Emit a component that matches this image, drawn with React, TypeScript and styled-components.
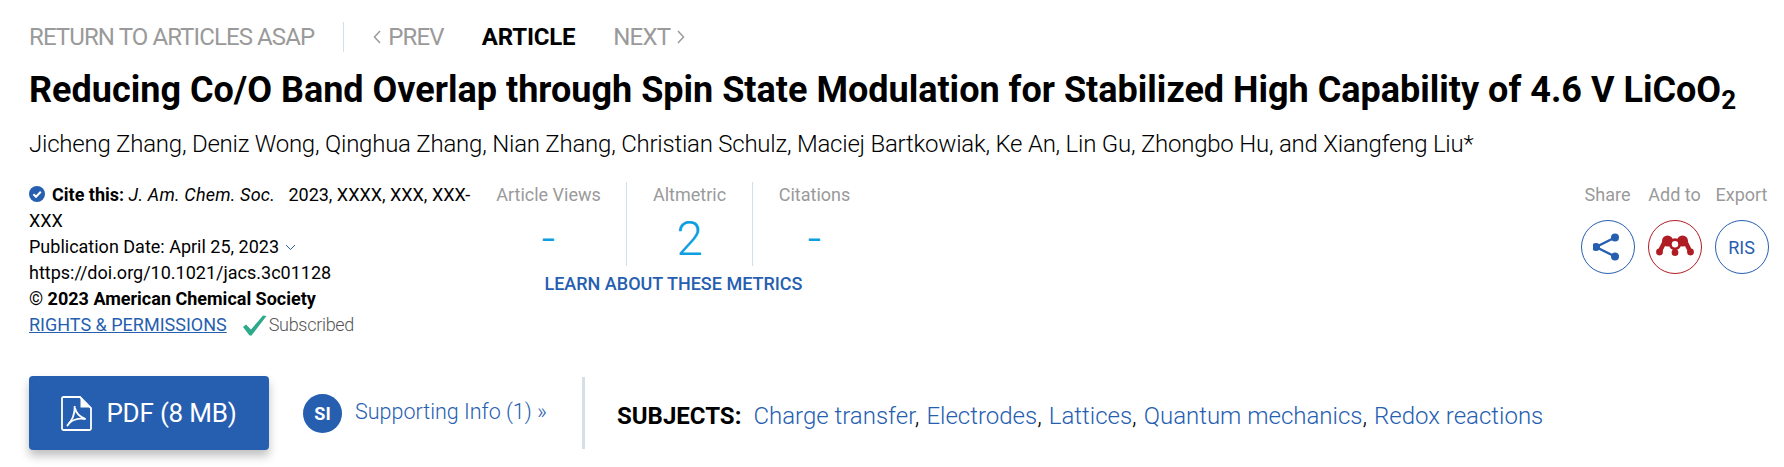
import styled, { createGlobalStyle } from "styled-components";

const GlobalStyle = createGlobalStyle`
  html, body { margin: 0; padding: 0; background: #fff; }
  body { font-family: Roboto, "Liberation Sans", sans-serif; color: #000; }
  a { text-decoration: none; color: inherit; }
`;

const blue = "#265eb0";
const grey = "#9a9a9a";
const red = "#b01c24";

const Page = styled.div`
  width: 1784px;
  height: 467px;
  box-sizing: border-box;
  padding: 19px 14px 0 29px;
  overflow: hidden;
`;

const Nav = styled.nav`
  display: flex;
  align-items: center;
  height: 36px;
  font-size: 24px;
  color: ${grey};
`;

const ReturnLink = styled.a`
  padding-right: 29px;
  margin-right: 29px;
  height: 30px;
  line-height: 30px;
  letter-spacing: -0.9px;
  border-right: 1px solid #d5dfe8;
`;

const NavItem = styled.a<{ $active?: boolean }>`
  display: flex;
  align-items: center;
  gap: 7px;
  margin-right: 38px;
  letter-spacing: ${(p) => (p.$active ? "-0.2px" : "-0.8px")};
  color: ${(p) => (p.$active ? "#000" : grey)};
  font-weight: ${(p) => (p.$active ? 700 : 400)};
`;

const Title = styled.h1`
  margin: 14px 0 0;
  font-size: 36px;
  line-height: 42px;
  font-weight: 700;
  white-space: nowrap;

  sub {
    font-size: 26px;
    line-height: 0;
    vertical-align: -7px;
  }
`;

const Authors = styled.div`
  margin-top: 18px;
  font-size: 24px;
  font-weight: 300;
  line-height: 30px;
  letter-spacing: -0.23px;
  white-space: nowrap;
`;

const Info = styled.div`
  display: flex;
  margin-top: 23px;
`;

const Cite = styled.div`
  width: 457px;
  font-size: 18px;
  line-height: 26px;
  flex: none;

  i {
    letter-spacing: 0.2px;
  }
`;

const CiteLine = styled.div`
  display: flex;
  align-items: center;
`;

const CiteWrap = styled.div`
  width: 445px;
`;

const CheckBadge = styled.svg`
  width: 16px;
  height: 16px;
  margin-right: 7px;
  vertical-align: -1px;
`;

const Rights = styled.a`
  color: ${blue};
  text-decoration: underline;
`;

const Subscribed = styled.span`
  display: inline-flex;
  align-items: center;
  gap: 2px;
  margin-left: 15px;
  color: #555;
  font-weight: 300;
  letter-spacing: -0.3px;
`;

const Metrics = styled.div`
  width: 393px;
  flex: none;
`;

const MetricRow = styled.div`
  display: flex;
`;

const Metric = styled.div<{ $first?: boolean; $last?: boolean }>`
  width: ${(p) => (p.$first ? "141px" : "126px")};
  height: 84px;
  padding-right: ${(p) => (p.$first ? "15px" : p.$last ? "3px" : "0")};
  text-align: center;
  box-sizing: border-box;
  border-right: ${(p) => (p.$last ? "none" : "1px solid #d5dfe8")};
`;

const MetricLabel = styled.div`
  font-size: 18px;
  line-height: 26px;
  color: ${grey};
`;

const MetricValue = styled.div`
  margin-top: 6px;
  font-size: 48px;
  line-height: 50px;
  font-weight: 300;
  color: #0d9fe0;
`;

const LearnLink = styled.a`
  display: block;
  width: 375px;
  margin-top: 5px;
  text-align: center;
  color: ${blue};
  font-size: 18px;
  font-weight: 500;
  line-height: 26px;
`;

const Actions = styled.div`
  margin-left: auto;
  margin-right: 1px;
  display: flex;
  gap: 12px;
`;

const Action = styled.div`
  width: 55px;
  display: flex;
  flex-direction: column;
  align-items: center;
`;

const ActionLabel = styled.div`
  font-size: 18px;
  line-height: 26px;
  color: ${grey};
  white-space: nowrap;
`;

const RoundButton = styled.a<{ $color: string }>`
  margin-top: 12px;
  width: 54px;
  height: 54px;
  box-sizing: border-box;
  border-radius: 50%;
  border: 1px solid ${(p) => p.$color};
  color: ${(p) => p.$color};
  display: flex;
  align-items: center;
  justify-content: center;
  font-size: 18px;
`;

const Tools = styled.div`
  display: flex;
  align-items: center;
  margin-top: 38px;
`;

const PdfButton = styled.a`
  width: 240px;
  height: 74px;
  box-sizing: border-box;
  background: ${blue};
  border-radius: 4px;
  box-shadow: 0 6px 10px rgba(0, 0, 0, 0.25);
  color: #fff;
  font-size: 26px;
  font-weight: 400;
  letter-spacing: -0.2px;
  display: flex;
  align-items: center;
  justify-content: center;
  gap: 14px;
  flex: none;
`;

const Supporting = styled.a`
  display: flex;
  align-items: center;
  margin-left: 34px;
  color: ${blue};
  font-size: 21.5px;
  font-weight: 300;
  gap: 13px;
  white-space: nowrap;
  width: 279px;
`;

const SiBadge = styled.span`
  width: 39px;
  height: 39px;
  border-radius: 50%;
  background: ${blue};
  color: #fff;
  font-size: 18px;
  font-weight: 700;
  display: flex;
  align-items: center;
  justify-content: center;
`;

const SupportingText = styled.span`
  margin-top: -3px;
`;

const Subjects = styled.div`
  display: flex;
  align-items: center;
  height: 72px;
  box-sizing: border-box;
  padding: 6px 0 0 32px;
  border-left: 3px solid #d5dfe8;
  font-size: 24px;
  white-space: nowrap;
`;

const SubjectsLabel = styled.strong`
  margin-right: 12px;
`;

const SubjectLink = styled.a`
  color: ${blue};
  font-weight: 300;
`;

const Comma = styled.span`
  font-weight: 300;
  margin-right: 7px;
`;

const subjects = ["Charge transfer", "Electrodes", "Lattices", "Quantum mechanics", "Redox reactions"];

const Chevron = ({ dir }: { dir: "left" | "right" }) => (
  <svg width="8" height="14" viewBox="0 0 8 14" fill="none" stroke="currentColor" strokeWidth="1.5">
    <path d={dir === "left" ? "M7 1 1.5 7 7 13" : "M1 1 6.5 7 1 13"} />
  </svg>
);

export default function App() {
  return (
    <Page>
      <GlobalStyle />
      <Nav>
        <ReturnLink>RETURN TO ARTICLES ASAP</ReturnLink>
        <NavItem>
          <Chevron dir="left" />
          PREV
        </NavItem>
        <NavItem $active>ARTICLE</NavItem>
        <NavItem>
          NEXT
          <Chevron dir="right" />
        </NavItem>
      </Nav>
      <Title>
        Reducing Co/O Band Overlap through Spin State Modulation for Stabilized High Capability of 4.6 V LiCoO
        <sub>2</sub>
      </Title>
      <Authors>
        Jicheng Zhang, Deniz Wong, Qinghua Zhang, Nian Zhang, Christian Schulz, Maciej Bartkowiak, Ke An, Lin Gu, Zhongbo Hu, and Xiangfeng Liu*
      </Authors>
      <Info>
        <Cite>
          <CiteWrap>
            <CheckBadge viewBox="0 0 16 16">
              <circle cx="8" cy="8" r="8" fill={blue} />
              <path d="M4.4 8.2 7 10.8 11.8 5.8" fill="none" stroke="#fff" strokeWidth="2" />
            </CheckBadge>
            <b>Cite this:</b> <i>J. Am. Chem. Soc.</i>&nbsp;&nbsp; 2023, XXXX, XXX, XXX-
            <br />
            XXX
          </CiteWrap>
          <CiteLine>
            Publication Date: April 25, 2023
            <svg width="11" height="7" viewBox="0 0 11 7" fill="none" stroke={blue} strokeWidth="1" style={{ marginLeft: 6 }}>
              <path d="M1 1 5.5 5.5 10 1" />
            </svg>
          </CiteLine>
          <div>https://doi.org/10.1021/jacs.3c01128</div>
          <div>
            © <b>2023 American Chemical Society</b>
          </div>
          <CiteLine>
            <Rights>RIGHTS &amp; PERMISSIONS</Rights>
            <Subscribed>
              <svg width="25" height="21" viewBox="0 0 25 21">
                <path d="M1 12 4 9.5 9 14.5 21 0.5 24.5 1 9.5 20.5 7.5 20.5Z" fill="#2ea98b" />
              </svg>
              Subscribed
            </Subscribed>
          </CiteLine>
        </Cite>
        <Metrics>
          <MetricRow>
            <Metric $first>
              <MetricLabel>Article Views</MetricLabel>
              <MetricValue>-</MetricValue>
            </Metric>
            <Metric>
              <MetricLabel>Altmetric</MetricLabel>
              <MetricValue>2</MetricValue>
            </Metric>
            <Metric $last>
              <MetricLabel>Citations</MetricLabel>
              <MetricValue>-</MetricValue>
            </Metric>
          </MetricRow>
          <LearnLink>LEARN ABOUT THESE METRICS</LearnLink>
        </Metrics>
        <Actions>
          <Action>
            <ActionLabel>Share</ActionLabel>
            <RoundButton $color={blue}>
              <svg width="30" height="30" viewBox="1.5 0 30 30" fill={blue} stroke="none">
                <circle cx="4.5" cy="15" r="4" />
                <circle cx="23.5" cy="5.5" r="4" />
                <circle cx="23.5" cy="24.5" r="4" />
                <path d="M23.5 5.5 4.5 15 23.5 24.5" fill="none" stroke={blue} strokeWidth="2.4" />
              </svg>
            </RoundButton>
          </Action>
          <Action>
            <ActionLabel>Add to</ActionLabel>
            <RoundButton $color={red}>
              <svg width="38" height="24" viewBox="0 0 38 24" fill={red}>
                <circle cx="11.5" cy="6" r="5.5" />
                <circle cx="26.5" cy="6" r="5.5" />
                <circle cx="19" cy="9.3" r="6" />
                <circle cx="3.5" cy="17" r="3.4" />
                <circle cx="19" cy="17.7" r="3.4" />
                <circle cx="34.5" cy="17" r="3.4" />
                <path d="M3.5 17 9 6M34.5 17 29 6" stroke={red} strokeWidth="4.5" fill="none" />
                <path d="M19 10V17" stroke={red} strokeWidth="4" fill="none" />
                <circle cx="19" cy="9.3" r="3.2" fill="#fff" />
              </svg>
            </RoundButton>
          </Action>
          <Action>
            <ActionLabel>Export</ActionLabel>
            <RoundButton $color={blue}>RIS</RoundButton>
          </Action>
        </Actions>
      </Info>
      <Tools>
        <PdfButton>
          <svg width="31" height="35" viewBox="0 0 31 35" fill="none" stroke="#fff" strokeWidth="1.8">
            <path d="M19 1H2.5C1.6 1 1 1.6 1 2.5V32.5C1 33.4 1.6 34 2.5 34H28.5C29.4 34 30 33.4 30 32.5V12L19 1Z" />
            <path d="M19.5 2V11.5H29Z" fill="#fff" stroke="none" />
            <path d="M13.7 10C14 17 11 25 6 30" />
            <path d="M8 27C13 23 19 22 24.5 23" />
            <path d="M14 12C15 17 19 21 24.5 23" />
          </svg>
          PDF (8 MB)
        </PdfButton>
        <Supporting>
          <SiBadge>SI</SiBadge>
          <SupportingText>Supporting Info (1) »</SupportingText>
        </Supporting>
        <Subjects>
          <SubjectsLabel>SUBJECTS:</SubjectsLabel>
          {subjects.map((s, i) => (
            <span key={s}>
              <SubjectLink>{s}</SubjectLink>
              {i < subjects.length - 1 && <Comma>,</Comma>}
            </span>
          ))}
        </Subjects>
      </Tools>
    </Page>
  );
}
